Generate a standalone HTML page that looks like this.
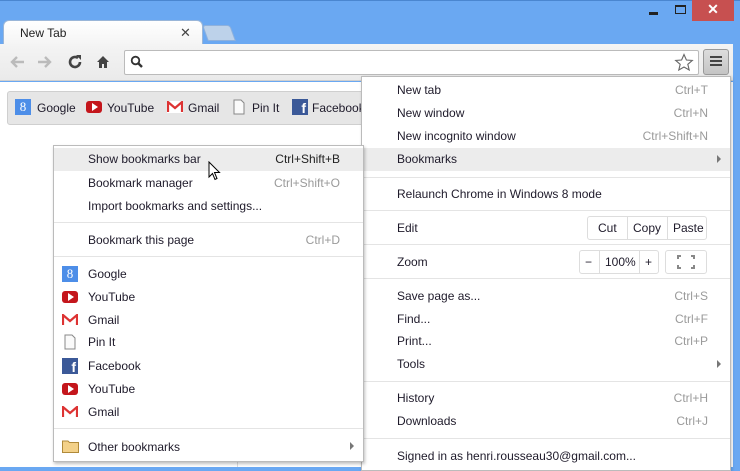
<!DOCTYPE html>
<html><head><meta charset="utf-8"><style>
*{margin:0;padding:0;box-sizing:border-box}
body{width:740px;height:467px;overflow:hidden;background:#6aa8f2;font-family:"Liberation Sans",sans-serif;font-size:12px;color:#1e1a2a;position:relative}
.a{position:absolute}
.t{position:absolute;white-space:nowrap;line-height:14px}
.s{position:absolute;white-space:nowrap;line-height:14px;color:#9a9a9a;text-align:right}
.sep{position:absolute;height:1px;background:#e4e4e4}
.hl{position:absolute;background:#ececec}
</style></head><body>
<div class="a" style="left:0;top:0;width:740px;height:1px;background:#4a86d0"></div>
<!-- window controls -->
<div class="a" style="left:649px;top:12px;width:9px;height:3px;background:#222"></div>
<div class="a" style="left:675px;top:5px;width:11px;height:9px;border:1px solid #222;border-top-width:2px"></div>
<div class="a" style="left:692px;top:0;width:42px;height:21px;background:#c75050;color:#fff;font-size:14px;text-align:center;line-height:19px;font-weight:bold">✕</div>
<!-- tabs -->
<div class="a" style="left:205px;top:25px;width:28px;height:16px;background:#bdd2ea;border:1px solid #8fb1dc;border-radius:3px 3px 0 0;transform:skewX(20deg)"></div>
<div class="a" style="left:3px;top:20px;width:200px;height:26px;background:linear-gradient(#fff,#f4f4f4);border-radius:6px 6px 0 0;border:1px solid #9ab6d8;border-bottom:none"></div>
<div class="t" style="left:20px;top:26px;color:#222">New Tab</div>
<div class="t" style="left:180px;top:26px;font-size:13px;color:#444">✕</div>
<!-- toolbar -->
<div class="a" style="left:0;top:44px;width:733px;height:37px;background:linear-gradient(#f4f4f4,#eaeaea);border-bottom:1px solid #cfcfcf"></div>
<svg class="a" style="left:9px;top:55px" width="16" height="14"><path d="M15 7H3M8 2L3 7L8 12" fill="none" stroke="#bbb" stroke-width="2.4"/></svg>
<svg class="a" style="left:37px;top:55px" width="16" height="14"><path d="M1 7H13M8 2L13 7L8 12" fill="none" stroke="#bbb" stroke-width="2.4"/></svg>
<svg class="a" style="left:67px;top:54px" width="16" height="16"><path d="M13 8A5 5 0 1 1 11 4" fill="none" stroke="#444" stroke-width="2.6"/><path d="M9 1H14V6Z" fill="#444"/></svg>
<svg class="a" style="left:96px;top:55px" width="14" height="14"><path d="M1 7 L7 1 L13 7 L11 7 L11 13 L8 13 L8 9 L6 9 L6 13 L3 13 L3 7Z" fill="#444"/></svg>
<div class="a" style="left:124px;top:50px;width:575px;height:25px;background:#fff;border:1px solid #bbb;border-radius:2px"></div>
<svg class="a" style="left:130px;top:55px" width="14" height="14"><circle cx="5.5" cy="5.5" r="3.8" fill="none" stroke="#333" stroke-width="1.8"/><path d="M8 8 L12 12" stroke="#333" stroke-width="2.4"/></svg>
<svg class="a" style="left:674px;top:53px" width="20" height="19"><path d="M10 1.5 L12.4 7 L18.3 7.4 L13.8 11.3 L15.2 17 L10 14 L4.8 17 L6.2 11.3 L1.7 7.4 L7.6 7Z" fill="#fff" stroke="#666" stroke-width="1.1"/></svg>
<div class="a" style="left:703px;top:49px;width:26px;height:26px;background:linear-gradient(#ddd,#c4c4c4);border:1px solid #999;border-radius:3px"></div>
<div class="a" style="left:710px;top:56px;width:12px;height:2px;background:#444;box-shadow:0 4px 0 #444,0 8px 0 #444"></div>
<!-- page -->
<div class="a" style="left:0;top:82px;width:733px;height:385px;background:#fff"></div>
<div class="a" style="left:7px;top:91px;width:360px;height:34px;background:#e6e6e6;border:1px solid #cfcfcf;border-radius:3px"></div>
<div class="a" style="left:15px;top:99px;width:16px;height:16px;background:#4d8ee8;color:#fff;font-size:13px;text-align:center;line-height:16px;font-family:'Liberation Serif',serif">8</div>
<div class="t" style="left:37px;top:101px">Google</div>
<div class="a" style="left:86px;top:101px;width:16px;height:12px;background:#c4161c;border-radius:3px"></div>
<div class="a" style="left:92px;top:103px;border-left:6px solid #fff;border-top:4px solid transparent;border-bottom:4px solid transparent"></div>
<div class="t" style="left:107px;top:101px">YouTube</div>
<svg class="a" style="left:167px;top:101px" width="16" height="12"><rect width="16" height="12" fill="#fff"/><path d="M1 11 V1 L8 7 L15 1 V11" fill="none" stroke="#d33" stroke-width="2.2"/></svg>
<div class="t" style="left:188px;top:101px">Gmail</div>
<svg class="a" style="left:233px;top:99px" width="12" height="16"><path d="M1 1 H8 L11 4 V15 H1Z" fill="#fafafa" stroke="#888"/></svg>
<div class="t" style="left:252px;top:101px">Pin It</div>
<div class="a" style="left:292px;top:99px;width:16px;height:16px;background:#3b5998;color:#fff;font-weight:bold;font-size:14px;text-align:right;padding-right:2px;line-height:18px">f</div>
<div class="t" style="left:312px;top:101px">Facebook</div>
<div class="a" style="left:237px;top:440px;width:1px;height:27px;background:#ddd"></div>

<!-- main menu -->
<div class="a" style="left:361px;top:76px;width:370px;height:395px;background:#fff;border:1px solid #bbb;box-shadow:1px 1px 3px rgba(0,0,0,.2)"></div>
<div class="hl" style="left:362px;top:148px;width:368px;height:23px"></div>
<div class="t" style="left:397px;top:83px">New tab</div><div class="s" style="right:32px;top:83px">Ctrl+T</div>
<div class="t" style="left:397px;top:106px">New window</div><div class="s" style="right:32px;top:106px">Ctrl+N</div>
<div class="t" style="left:397px;top:129px">New incognito window</div><div class="s" style="right:32px;top:129px">Ctrl+Shift+N</div>
<div class="t" style="left:397px;top:152px">Bookmarks</div>
<div class="a" style="left:717px;top:155px;border-left:4px solid #777;border-top:4px solid transparent;border-bottom:4px solid transparent"></div>
<div class="sep" style="left:362px;top:177px;width:368px"></div>
<div class="t" style="left:397px;top:187px">Relaunch Chrome in Windows 8 mode</div>
<div class="sep" style="left:362px;top:210px;width:368px"></div>
<div class="t" style="left:397px;top:221px">Edit</div>
<div class="a" style="left:587px;top:216px;width:120px;height:24px;border:1px solid #ddd;border-radius:3px"></div>
<div class="a" style="left:627px;top:217px;width:1px;height:22px;background:#ddd"></div>
<div class="a" style="left:667px;top:217px;width:1px;height:22px;background:#ddd"></div>
<div class="t" style="left:598px;top:221px">Cut</div>
<div class="t" style="left:633px;top:221px">Copy</div>
<div class="t" style="left:673px;top:221px">Paste</div>
<div class="sep" style="left:362px;top:244px;width:368px"></div>
<div class="t" style="left:397px;top:255px">Zoom</div>
<div class="a" style="left:579px;top:250px;width:80px;height:24px;border:1px solid #ddd;border-radius:3px"></div>
<div class="a" style="left:599px;top:251px;width:1px;height:22px;background:#ddd"></div>
<div class="a" style="left:639px;top:251px;width:1px;height:22px;background:#ddd"></div>
<div class="t" style="left:585px;top:255px">−</div>
<div class="t" style="left:605px;top:255px">100%</div>
<div class="t" style="left:645px;top:255px">+</div>
<div class="a" style="left:665px;top:250px;width:42px;height:24px;border:1px solid #ddd;border-radius:3px"></div>
<svg class="a" style="left:677px;top:255px" width="18" height="14"><path d="M1 4V1H4M14 1H17V4M17 10V13H14M4 13H1V10" fill="none" stroke="#888" stroke-width="2"/></svg>
<div class="sep" style="left:362px;top:278px;width:368px"></div>
<div class="t" style="left:397px;top:289px">Save page as...</div><div class="s" style="right:32px;top:289px">Ctrl+S</div>
<div class="t" style="left:397px;top:312px">Find...</div><div class="s" style="right:32px;top:312px">Ctrl+F</div>
<div class="t" style="left:397px;top:334px">Print...</div><div class="s" style="right:32px;top:334px">Ctrl+P</div>
<div class="t" style="left:397px;top:357px">Tools</div>
<div class="a" style="left:717px;top:360px;border-left:4px solid #777;border-top:4px solid transparent;border-bottom:4px solid transparent"></div>
<div class="sep" style="left:362px;top:381px;width:368px"></div>
<div class="t" style="left:397px;top:391px">History</div><div class="s" style="right:32px;top:391px">Ctrl+H</div>
<div class="t" style="left:397px;top:414px">Downloads</div><div class="s" style="right:32px;top:414px">Ctrl+J</div>
<div class="sep" style="left:362px;top:438px;width:368px"></div>
<div class="t" style="left:397px;top:449px">Signed in as henri.rousseau30@gmail.com...</div>

<!-- submenu -->
<div class="a" style="left:53px;top:145px;width:311px;height:317px;background:#fff;border:1px solid #bbb;box-shadow:1px 2px 3px rgba(0,0,0,.25)"></div>
<div class="hl" style="left:54px;top:148px;width:309px;height:23px"></div>
<div class="t" style="left:88px;top:152px">Show bookmarks bar</div><div class="s" style="left:250px;width:90px;top:152px;color:#222">Ctrl+Shift+B</div>
<div class="t" style="left:88px;top:176px">Bookmark manager</div><div class="s" style="left:250px;width:90px;top:176px">Ctrl+Shift+O</div>
<div class="t" style="left:88px;top:199px">Import bookmarks and settings...</div>
<div class="sep" style="left:54px;top:222px;width:309px"></div>
<div class="t" style="left:88px;top:233px">Bookmark this page</div><div class="s" style="left:250px;width:90px;top:233px">Ctrl+D</div>
<div class="sep" style="left:54px;top:256px;width:309px"></div>
<div class="a" style="left:62px;top:266px;width:16px;height:16px;background:#4d8ee8;color:#fff;font-size:13px;text-align:center;line-height:16px;font-family:'Liberation Serif',serif">8</div>
<div class="t" style="left:88px;top:267px">Google</div>
<div class="a" style="left:62px;top:291px;width:16px;height:12px;background:#c4161c;border-radius:3px"></div>
<div class="a" style="left:68px;top:293px;border-left:6px solid #fff;border-top:4px solid transparent;border-bottom:4px solid transparent"></div>
<div class="t" style="left:88px;top:290px">YouTube</div>
<svg class="a" style="left:62px;top:314px" width="16" height="12"><path d="M1 11 V1 L8 7 L15 1 V11" fill="none" stroke="#d33" stroke-width="2.2"/></svg>
<div class="t" style="left:88px;top:313px">Gmail</div>
<svg class="a" style="left:64px;top:334px" width="12" height="16"><path d="M1 1 H8 L11 4 V15 H1Z" fill="#fafafa" stroke="#888"/></svg>
<div class="t" style="left:88px;top:335px">Pin It</div>
<div class="a" style="left:62px;top:358px;width:16px;height:16px;background:#3b5998;color:#fff;font-weight:bold;font-size:14px;text-align:right;padding-right:2px;line-height:18px">f</div>
<div class="t" style="left:88px;top:359px">Facebook</div>
<div class="a" style="left:62px;top:383px;width:16px;height:12px;background:#c4161c;border-radius:3px"></div>
<div class="a" style="left:68px;top:385px;border-left:6px solid #fff;border-top:4px solid transparent;border-bottom:4px solid transparent"></div>
<div class="t" style="left:88px;top:382px">YouTube</div>
<svg class="a" style="left:62px;top:406px" width="16" height="12"><path d="M1 11 V1 L8 7 L15 1 V11" fill="none" stroke="#d33" stroke-width="2.2"/></svg>
<div class="t" style="left:88px;top:405px">Gmail</div>
<div class="sep" style="left:54px;top:428px;width:309px"></div>
<svg class="a" style="left:62px;top:439px" width="17" height="14"><path d="M0.5 2 H6 L7.5 3.5 H16.5 V13.5 H0.5Z" fill="#f3d189" stroke="#b08a3a"/></svg>
<div class="t" style="left:88px;top:440px">Other bookmarks</div>
<div class="a" style="left:350px;top:442px;border-left:4px solid #777;border-top:4px solid transparent;border-bottom:4px solid transparent"></div>
<!-- cursor -->
<svg class="a" style="left:208px;top:161px" width="14" height="21"><path d="M1 1 V16 L4.5 12.5 L7 18.5 L9 17.5 L6.5 11.5 L11.5 11.5Z" fill="#fff" stroke="#000"/></svg>
</body></html>
